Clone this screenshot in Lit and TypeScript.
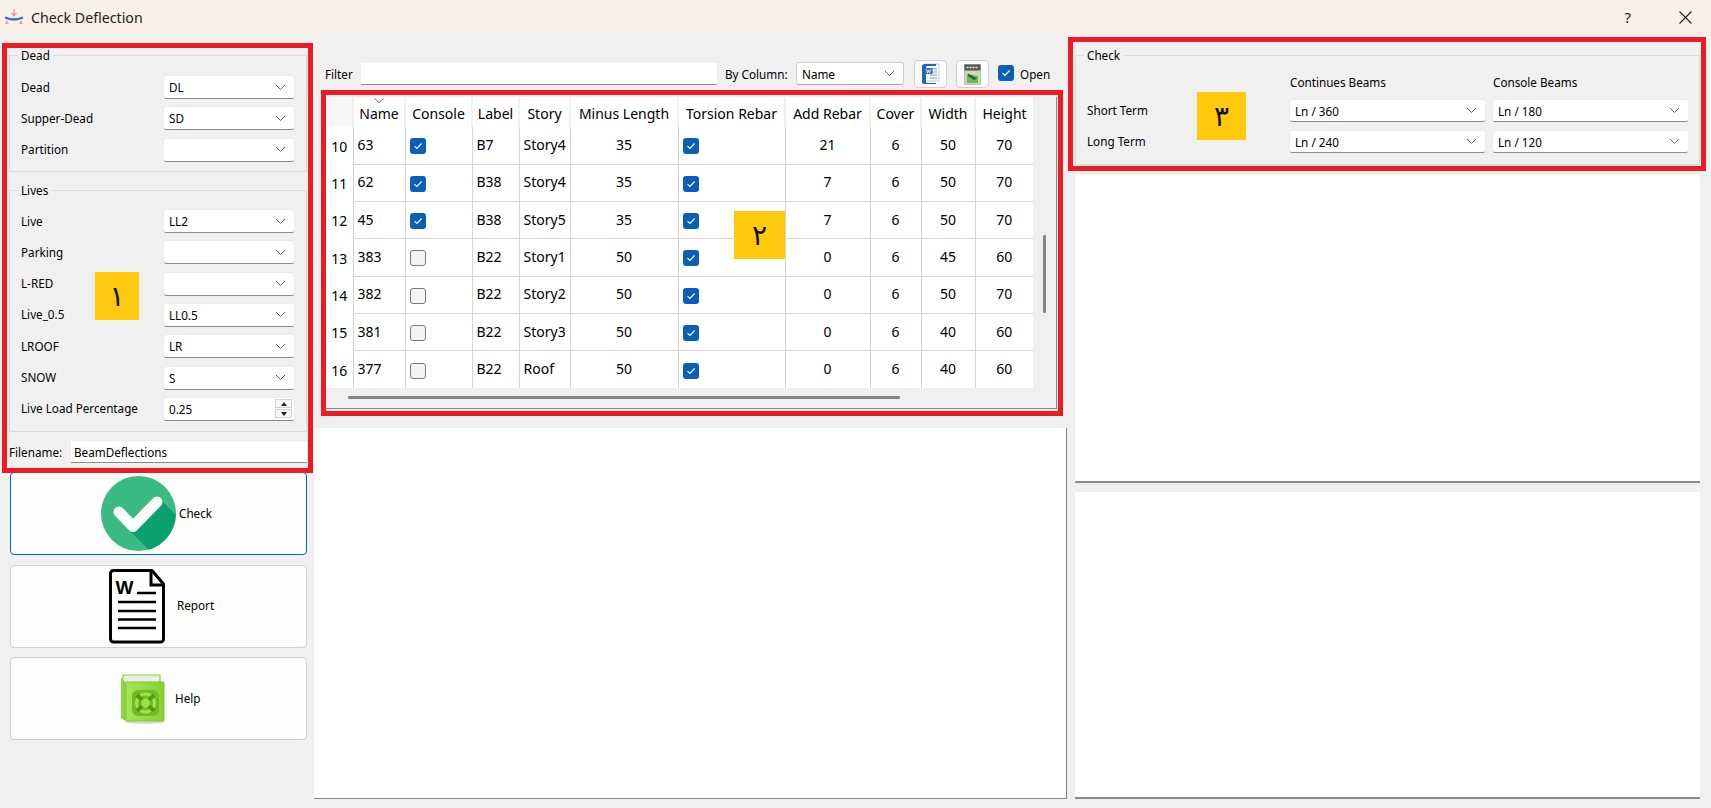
import { LitElement, html, css, svg } from 'lit';
import { customElement } from 'lit/decorators.js';

const chevron = html`<svg class="chev" width="11" height="7" viewBox="0 0 11 7"><path d="M1 1l4.5 4.5L10 1" fill="none" stroke="#666" stroke-width="1"/></svg>`;

const tick = html`<svg width="10" height="8" viewBox="0 0 10 8"><path d="M1.5 4.2l2.4 2.3L8.6 1.5" fill="none" stroke="#fff" stroke-width="1.1"/></svg>`;

const rows = [
  { n: 10, name: '63', console: true, label: 'B7', story: 'Story4', minus: 35, add: 21, w: 50, h: 70 },
  { n: 11, name: '62', console: true, label: 'B38', story: 'Story4', minus: 35, add: 7, w: 50, h: 70 },
  { n: 12, name: '45', console: true, label: 'B38', story: 'Story5', minus: 35, add: 7, w: 50, h: 70 },
  { n: 13, name: '383', console: false, label: 'B22', story: 'Story1', minus: 50, add: 0, w: 45, h: 60 },
  { n: 14, name: '382', console: false, label: 'B22', story: 'Story2', minus: 50, add: 0, w: 50, h: 70 },
  { n: 15, name: '381', console: false, label: 'B22', story: 'Story3', minus: 50, add: 0, w: 40, h: 60 },
  { n: 16, name: '377', console: false, label: 'B22', story: 'Roof', minus: 50, add: 0, w: 40, h: 60 },
];

const headers = ['Name', 'Console', 'Label', 'Story', 'Minus Length', 'Torsion Rebar', 'Add Rebar', 'Cover', 'Width', 'Height'];

const appIcon = svg`<svg width="20" height="16" viewBox="0 0 20 16">
  <path d="M1 8.5q9 4 18 0" fill="none" stroke="#3d62e8" stroke-width="2.4"/>
  <path d="M10 0v6M7.5 4l2.5 3 2.5-3" fill="none" stroke="#e89a90" stroke-width="1.2"/>
  <path d="M3 11l2 4H1zM17 11l2 4h-4z" fill="#e8a59c"/>
</svg>`;

const checkIcon = svg`<svg width="75" height="75" viewBox="0 0 75 75">
  <defs><clipPath id="disc"><circle cx="37.5" cy="37.5" r="37.5"/></clipPath></defs>
  <circle cx="37.5" cy="37.5" r="37.5" fill="#3abb82"/>
  <path d="M60 24L80 44V80H54L30 56z" fill="#0aa06e" clip-path="url(#disc)"/>
  <path d="M18 36L32 50.5L56 26" fill="none" stroke="#fff" stroke-width="11" stroke-linecap="round" stroke-linejoin="round"/>
</svg>`;

const reportIcon = svg`<svg width="56" height="75" viewBox="0 0 56 75">
  <path d="M4 1.5H43L54.5 15V70a3 3 0 0 1-3 3H4.500a3 3 0 0 1-3-3V4.500a3 3 0 0 1 3-3z" fill="#fff" stroke="#000" stroke-width="3" stroke-linejoin="round"/>
  <path d="M42 2V16H54" fill="none" stroke="#000" stroke-width="3"/>
  <text x="6.500" y="25" font-family="'Liberation Sans', sans-serif" font-weight="700" font-size="19" fill="#000">W</text>
  <path d="M28 24H47M9 33H47M9 42H47M9 50.500H47M9 59H47" stroke="#000" stroke-width="2.400" fill="none"/>
</svg>`;

const helpIcon = svg`<svg width="46" height="53" viewBox="0 0 46 53">
  <defs><linearGradient id="cover" x1="0" x2="1" y1="0" y2="0"><stop offset="0" stop-color="#a6e45a"/><stop offset="1" stop-color="#84d234"/></linearGradient></defs>
  <ellipse cx="25" cy="49.500" rx="20" ry="2.500" fill="#d9d9d9"/>
  <path d="M3 3h37v8H6q-3 0-3-4z" fill="#eaeee4" stroke="#8fd23e" stroke-width="1.200"/>
  <path d="M1 5v40q0 2 3 3l5 1V11L3 9z" fill="#8dd43e"/>
  <rect x="6" y="10" width="38" height="39" rx="1" fill="url(#cover)" stroke="#7fc92f"/>
  <rect x="12" y="18" width="27" height="26" rx="6" fill="#73bb25"/>
  <circle cx="25.500" cy="31" r="9" fill="none" stroke="#a4e04f" stroke-width="3"/>
  <circle cx="25.500" cy="31" r="4.500" fill="#9fe03e"/>
  <path d="M17 23l5 5M34 23l-5 5M17 39l5-5M34 39l-5-5" stroke="#4f9a12" stroke-width="4"/>
</svg>`;

const wordIcon = svg`<svg width="19" height="22" viewBox="0 0 19 22">
  <path d="M4 1h14v17H4z" fill="#f4f7fb" stroke="#9db6d8" stroke-width=".6"/>
  <path d="M8 6h8M9 9h7M9 12h7M9 15h7" stroke="#7d9cc8" stroke-width="1"/>
  <path d="M1 3q0-2 3-2h11v2H6q-1 0-1 2v14q0 1 2 1h8v1H4q-3 0-3-2z" fill="#2f62ae"/>
  <rect x="4.500" y="5" width="7" height="6" fill="#3b78c4"/>
  <path d="M5.500 6.200l1 3.600 1-2.600 1 2.600 1-3.600" stroke="#fff" stroke-width=".8" fill="none"/>
</svg>`;

const excelIcon = svg`<svg width="17" height="21" viewBox="0 0 17 21">
  <rect x=".5" y=".5" width="16" height="20" fill="#c9d9bd" stroke="#8a9a80" stroke-width=".5"/>
  <rect x=".5" y=".5" width="16" height="6" fill="#55574f"/>
  <path d="M2.500 3.500h12" stroke="#e8e8e0" stroke-width="1.400" stroke-dasharray="2 1"/>
  <path d="M3 10l11 2v7H3z" fill="#7bb25f"/>
  <path d="M4 9.500l9 5-3 1.500-6-4z" fill="#1d6a3a"/>
</svg>`;

@customElement('app-root')
export class AppRoot extends LitElement {
  static styles = css`
    :host {
      display: block;
      position: relative;
      width: 1711px;
      height: 808px;
      overflow: hidden;
      background: #f0f0f0;
      font-family: 'Noto Sans', 'Liberation Sans', sans-serif;
      font-size: 11.7px;
      color: #000;
    }
    .titlebar {
      height: 34px;
      background: #f9f1e7;
      display: flex;
      align-items: center;
      padding: 0 19px 0 4px;
      font-size: 14.2px;
      color: #222;
    }
    .titlebar .name { margin-left: 7px; flex: 1; }
    .titlebar .help { font-size: 15px; margin-right: 48px; }
    .body { display: flex; height: 774px; }

    /* left column */
    .left { width: 314px; flex: none; padding: 14px 7px 0 9px; box-sizing: border-box; }
    fieldset {
      margin: 0;
      padding: 0;
      border: 1px solid #dcdcdc;
      min-width: 0;
    }
    legend { padding: 0 3px; margin-left: 8px; line-height: 14px; }
    .form {
      display: grid;
      grid-template-columns: 143px 130px;
      grid-auto-rows: 23px;
      row-gap: 8.33px;
      padding-left: 11px;
      align-items: center;
    }
    .form > span { padding-bottom: 2px; }
    .dead { height: 124px; box-sizing: border-box; }
    .dead .form { padding-top: 14px; }
    .lives { height: 249px; margin-top: 11px; box-sizing: border-box; }
    .lives .form { padding-top: 13px; }
    .combo {
      height: 23px;
      box-sizing: border-box;
      background: #fff;
      border-bottom: 1px solid #8c8c8c;
      box-shadow: 0 0 1px #cfcfcf;
      border-radius: 2px;
      display: flex;
      align-items: center;
      justify-content: space-between;
      padding: 0 8px 0 5px;
    }
    .spin { padding-right: 2px; }
    .spin-btns { display: flex; flex-direction: column; gap: 1px; width: 17px; }
    .spin-btns span {
      height: 9px;
      box-sizing: border-box;
      background: #f7f7f7;
      border: 1px solid #d4d4d4;
      display: flex;
      align-items: center;
      justify-content: center;
    }
    .arrow-up { width: 0; height: 0; border: 3.5px solid transparent; border-top: 0; border-bottom: 4px solid #222; }
    .arrow-down { width: 0; height: 0; border: 3.5px solid transparent; border-bottom: 0; border-top: 4px solid #222; }
    .file { display: flex; align-items: center; margin-top: 9px; }
    .file label { width: 62px; }
    .file .edit { flex: 1; height: 22px; }
    .edit {
      background: #fff;
      border-bottom: 1px solid #8c8c8c;
      box-sizing: border-box;
      display: flex;
      align-items: center;
      padding-left: 3px;
    }
    .actions { margin: 9px 0 0 1px; display: flex; flex-direction: column; gap: 9.5px; }
    .action {
      height: 83px;
      box-sizing: border-box;
      background: #fdfdfd;
      border: 1px solid #d0d0d0;
      border-radius: 4px;
      display: flex;
      align-items: center;
    }
    .action.on { border-color: #0067c0; padding-left: 90px; gap: 3px; }
    .action.report { padding-left: 98px; gap: 12px; }
    .action.helpbtn { padding-left: 109px; gap: 9px; }
    .action span { position: relative; top: -1px; }

    /* middle column */
    .middle { width: 753px; flex: none; display: flex; flex-direction: column; }
    .filter {
      height: 63px;
      flex: none;
      box-sizing: border-box;
      padding: 29px 0 0 11px;
      display: flex;
      align-items: flex-start;
    }
    .filter .lbl { line-height: 22px; }
    .filter .lbl.first { width: 36px; }
    .filter .edit { width: 356px; height: 22px; }
    .filter .by { margin-left: 8px; width: 71px; }
    .name-combo {
      width: 108px;
      margin-top: -1px;
      border: 1px solid #d0d0d0;
      border-bottom-color: #a8a8a8;
      box-shadow: none;
      border-radius: 3px;
    }
    .tool {
      width: 33px;
      height: 28px;
      margin-top: -3px;
      box-sizing: border-box;
      background: #fdfdfd;
      border: 1px solid #d0d0d0;
      border-radius: 4px;
      display: flex;
      align-items: center;
      justify-content: center;
    }
    .name-combo + .tool { margin-left: 10px; }
    .tool + .tool { margin-left: 9px; }
    .cb {
      width: 16px;
      height: 16px;
      border-radius: 3px;
      box-sizing: border-box;
      display: inline-flex;
      align-items: center;
      justify-content: center;
      flex: none;
    }
    .cb.on { background: #0a5fb8; }
    .cb.off { background: #f4f4f4; border: 1px solid #7a7a7a; }
    .openbox { margin: 2px 0 0 9px; }
    .openlbl { margin-left: 6px; line-height: 22px; }

    .tableview {
      margin-left: 12px;
      width: 731px;
      height: 312px;
      flex: none;
      box-sizing: border-box;
      border-right: 1px solid #8a8a8a;
      border-bottom: 1px solid #8a8a8a;
      display: flex;
      flex-direction: column;
      font-size: 14px;
      position: relative;
    }
    .table-clip { height: 291px; width: 707px; overflow: hidden; flex: none; background: #fff; }
    table {
      border-collapse: collapse;
      table-layout: fixed;
      width: 707px;
    }
    th {
      height: 30px;
      padding: 3px 0 0;
      box-sizing: border-box;
      font-weight: 400;
      background: #fff;
      border-left: 2px solid #f0f0f0;
      position: relative;
    }
    th.corner { background: #f7f7f7; border: 0; }
    th.num { text-align: center; padding-top: 1px; background: #fff; border: 0; }
    td {
      padding: 0 0 2px;
      box-sizing: border-box;
      text-align: center;
      border-left: 1px solid #d4d4d4;
      border-top: 1px solid #d4d4d4;
      height: 37.33px;
    }
    tr:first-child td { border-top: 0; }
    td.left-text { text-align: left; padding-left: 4px; }
    td.box { text-align: left; padding-left: 4px; }
    td.box .cb { vertical-align: middle; }
    .sort { position: absolute; top: 1px; left: 50%; margin-left: -5px; }
    .hbar { height: 3px; width: 552px; margin: 8px 0 0 22px; background: #858585; border-radius: 1px; flex: none; }
    .vbar {
      position: absolute;
      left: 717px;
      top: 138px;
      width: 3px;
      height: 78px;
      background: #858585;
      border-radius: 1px;
    }
    .canvas {
      margin-top: 19px;
      height: 371px;
      flex: none;
      box-sizing: border-box;
      background: #fff;
      border-right: 1px solid #7c8490;
      border-bottom: 1px solid #8a8a8a;
    }

    /* right column */
    .right { flex: 1; padding: 14px 11px 0 8px; box-sizing: border-box; }
    .check { height: 117px; box-sizing: border-box; }
    .check-grid {
      display: grid;
      grid-template-columns: 195px 195px 195px;
      column-gap: 8px;
      grid-template-rows: 16px 22px 22px;
      row-gap: 9px;
      margin-top: 12px;
      padding-left: 11px;
      align-items: center;
    }
    .check-grid .combo { height: 22px; margin-top: 2px; }
    .panel {
      width: 625px;
      background: #fff;
      border-bottom: 2px solid #8a8a8a;
      box-sizing: border-box;
    }
    .panel.one { height: 308px; margin-top: 10px; }
    .panel.two { height: 307px; margin-top: 9px; }

    /* annotations drawn over the screenshot */
    .mark { position: absolute; border: 5px solid #ed1c24; box-sizing: border-box; pointer-events: none; }
    .badge {
      position: absolute;
      background: #ffc90e;
      display: flex;
      align-items: center;
      justify-content: center;
      font-family: 'DejaVu Sans', sans-serif;
      font-size: 28px;
      color: #111;
    }
  `;

  private combo(value: string) {
    return html`<div class="combo"><span>${value}</span>${chevron}</div>`;
  }

  private formRow(label: string, value: string) {
    return html`<span>${label}</span>${this.combo(value)}`;
  }

  private cb(on: boolean) {
    return html`<span class="cb ${on ? 'on' : 'off'}">${on ? tick : ''}</span>`;
  }

  private renderLeft() {
    return html`
      <div class="left">
        <fieldset class="dead">
          <legend>Dead</legend>
          <div class="form">
            ${this.formRow('Dead', 'DL')}
            ${this.formRow('Supper-Dead', 'SD')}
            ${this.formRow('Partition', '')}
          </div>
        </fieldset>
        <fieldset class="lives">
          <legend>Lives</legend>
          <div class="form">
            ${this.formRow('Live', 'LL2')}
            ${this.formRow('Parking', '')}
            ${this.formRow('L-RED', '')}
            ${this.formRow('Live_0.5', 'LL0.5')}
            ${this.formRow('LROOF', 'LR')}
            ${this.formRow('SNOW', 'S')}
            <span>Live Load Percentage</span>
            <div class="combo spin">
              <span>0.25</span>
              <div class="spin-btns">
                <span><i class="arrow-up"></i></span>
                <span><i class="arrow-down"></i></span>
              </div>
            </div>
          </div>
        </fieldset>
        <div class="file">
          <label>Filename:</label>
          <div class="edit">BeamDeflections</div>
        </div>
        <div class="actions">
          <div class="action on">${checkIcon}<span>Check</span></div>
          <div class="action report">${reportIcon}<span>Report</span></div>
          <div class="action helpbtn">${helpIcon}<span>Help</span></div>
        </div>
      </div>
    `;
  }

  private renderTable() {
    return html`
      <div class="table-clip">
        <table>
          <colgroup>
            <col style="width:27px" /><col style="width:52px" /><col style="width:67px" />
            <col style="width:47px" /><col style="width:51px" /><col style="width:108px" />
            <col style="width:107px" /><col style="width:85px" /><col style="width:51px" />
            <col style="width:54px" /><col style="width:58px" />
          </colgroup>
          <thead>
            <tr>
              <th class="corner"></th>
              ${headers.map(
                (h, i) => html`<th>
                  ${i === 0
                    ? html`<svg class="sort" width="10" height="5" viewBox="0 0 10 5"><path d="M.5.5L5 4.500 9.500.5" fill="none" stroke="#666"/></svg>`
                    : ''}${h}
                </th>`
              )}
            </tr>
          </thead>
          <tbody>
            ${rows.map(
              (r) => html`<tr>
                <th class="num">${r.n}</th>
                <td class="left-text">${r.name}</td>
                <td class="box">${this.cb(r.console)}</td>
                <td class="left-text">${r.label}</td>
                <td class="left-text">${r.story}</td>
                <td>${r.minus}</td>
                <td class="box">${this.cb(true)}</td>
                <td>${r.add}</td>
                <td>6</td>
                <td>${r.w}</td>
                <td>${r.h}</td>
              </tr>`
            )}
          </tbody>
        </table>
      </div>
      <div class="hbar"></div>
      <div class="vbar"></div>
    `;
  }

  private renderMiddle() {
    return html`
      <div class="middle">
        <div class="filter">
          <span class="lbl first">Filter</span>
          <div class="edit"></div>
          <span class="lbl by">By Column:</span>
          <div class="combo name-combo"><span>Name</span>${chevron}</div>
          <div class="tool">${wordIcon}</div>
          <div class="tool">${excelIcon}</div>
          <span class="cb on openbox">${tick}</span>
          <span class="openlbl">Open</span>
        </div>
        <div class="tableview">${this.renderTable()}</div>
        <div class="canvas"></div>
      </div>
    `;
  }

  private renderRight() {
    return html`
      <div class="right">
        <fieldset class="check">
          <legend>Check</legend>
          <div class="check-grid">
            <span></span><span>Continues Beams</span><span>Console Beams</span>
            <span>Short Term</span>${this.combo('Ln / 360')}${this.combo('Ln / 180')}
            <span>Long Term</span>${this.combo('Ln / 240')}${this.combo('Ln / 120')}
          </div>
        </fieldset>
        <div class="panel one"></div>
        <div class="panel two"></div>
      </div>
    `;
  }

  render() {
    return html`
      <div class="titlebar">
        ${appIcon}
        <span class="name">Check Deflection</span>
        <span class="help">?</span>
        <svg width="13" height="13" viewBox="0 0 13 13"><path d="M.5.5l12 12M12.500.5l-12 12" stroke="#222" stroke-width="1.100"/></svg>
      </div>
      <div class="body">
        ${this.renderLeft()} ${this.renderMiddle()} ${this.renderRight()}
      </div>
      <div class="mark" style="left:2px;top:43px;width:311px;height:430px"></div>
      <div class="mark" style="left:321px;top:90px;width:742px;height:326px"></div>
      <div class="mark" style="left:1068px;top:37px;width:638px;height:134px"></div>
      <div class="badge" style="left:95px;top:272px;width:44px;height:48px">۱</div>
      <div class="badge" style="left:734px;top:211px;width:51px;height:48px">۲</div>
      <div class="badge" style="left:1197px;top:92px;width:49px;height:48px">۳</div>
    `;
  }
}
